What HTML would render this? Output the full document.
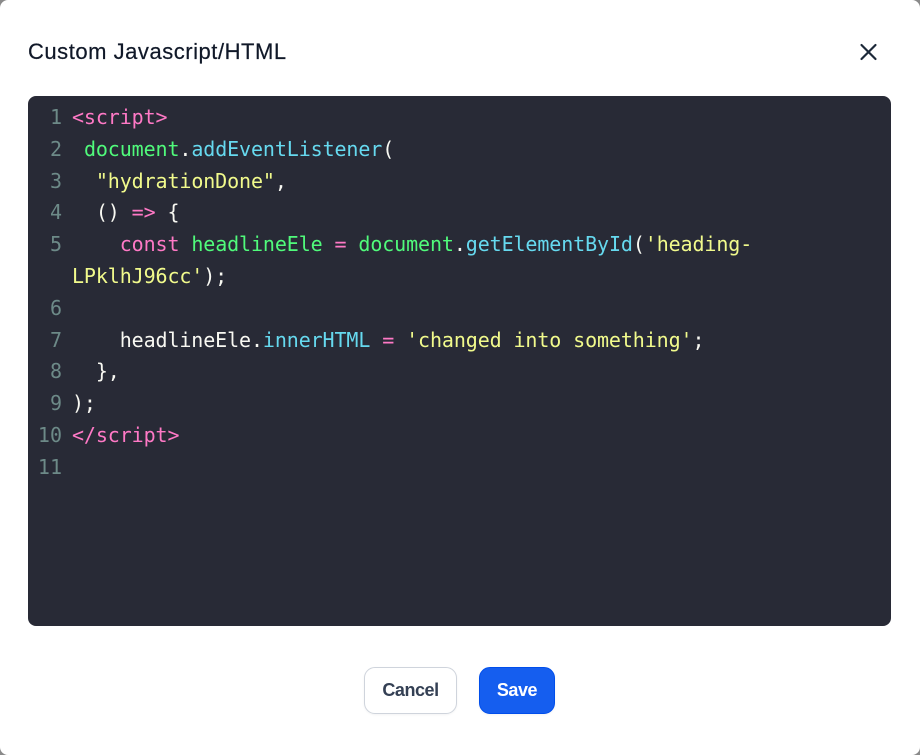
<!DOCTYPE html>
<html><head><meta charset="utf-8">
<style>
html,body{margin:0;padding:0;width:920px;height:755px;overflow:hidden;background:#8a8a8a}
#m{position:absolute;left:0;top:0;width:920px;height:755px;background:#fff;border-radius:8px;overflow:hidden}
#t{position:absolute;left:28px;top:39px;font:22px/26px "Liberation Sans",sans-serif;color:#101828;white-space:nowrap;letter-spacing:.53px;-webkit-text-stroke:.2px #101828}
#x{position:absolute;left:856px;top:40px}
#e{position:absolute;left:28px;top:96px;width:863px;height:530px;background:#282a36;border-radius:8px}
.l{position:absolute;left:0;width:34px;text-align:right;font:20px/32px "DejaVu Sans Mono",monospace;color:#6d8a88;white-space:pre}
.c{position:absolute;left:44px;font:20px/32px "DejaVu Sans Mono",monospace;letter-spacing:-.11px;color:#f8f8f2;white-space:pre}
.p{color:#ff79c6}.g{color:#50fa7b}.b{color:#66d9ef}.y{color:#f1fa8c}
.btn{position:absolute;top:667px;height:47px;box-sizing:border-box;border-radius:11px;font:bold 18px/45px "Liberation Sans",sans-serif;letter-spacing:-.45px;text-align:center}
#c{left:364px;width:93px;background:#fff;border:1.5px solid #cfd4dc;color:#344054;box-shadow:0 1px 2px rgba(16,24,40,.05)}
#s{left:479px;width:76px;background:#155eef;border:1.5px solid #004eeb;color:#fff;box-shadow:0 1px 2px rgba(16,24,40,.05)}
</style></head><body>
<div id="m">
<div id="t">Custom Javascript/HTML</div>
<svg id="x" width="24" height="24" viewBox="0 0 24 24" fill="none" stroke="#1d2939" stroke-width="2.2" stroke-linecap="round" stroke-linejoin="round"><path d="M19.5 5L5.5 19M5.5 5l14 14"/></svg>
<div id="e">
<div class="l" style="top:5px">1</div><div class="c" style="top:5px"><span class="p">&lt;script&gt;</span></div>
<div class="l" style="top:37px">2</div><div class="c" style="top:37px"> <span class="g">document</span>.<span class="b">addEventListener</span>(</div>
<div class="l" style="top:69px">3</div><div class="c" style="top:69px">  <span class="y">"hydrationDone"</span>,</div>
<div class="l" style="top:100px">4</div><div class="c" style="top:100px">  () <span class="p">=&gt;</span> {</div>
<div class="l" style="top:132px">5</div><div class="c" style="top:132px">    <span class="p">const</span> <span class="g">headlineEle</span> <span class="p">=</span> <span class="g">document</span>.<span class="b">getElementById</span>(<span class="y">'heading-</span></div>
<div class="c" style="top:164px"><span class="y">LPklhJ96cc'</span>);</div>
<div class="l" style="top:196px">6</div>
<div class="l" style="top:228px">7</div><div class="c" style="top:228px">    headlineEle.<span class="b">innerHTML</span> <span class="p">=</span> <span class="y">'changed into something'</span>;</div>
<div class="l" style="top:259px">8</div><div class="c" style="top:259px">  },</div>
<div class="l" style="top:291px">9</div><div class="c" style="top:291px">);</div>
<div class="l" style="top:323px">10</div><div class="c" style="top:323px"><span class="p">&lt;/script&gt;</span></div>
<div class="l" style="top:355px">11</div>
</div>
<div class="btn" id="c">Cancel</div>
<div class="btn" id="s">Save</div>
</div>
</body></html>
